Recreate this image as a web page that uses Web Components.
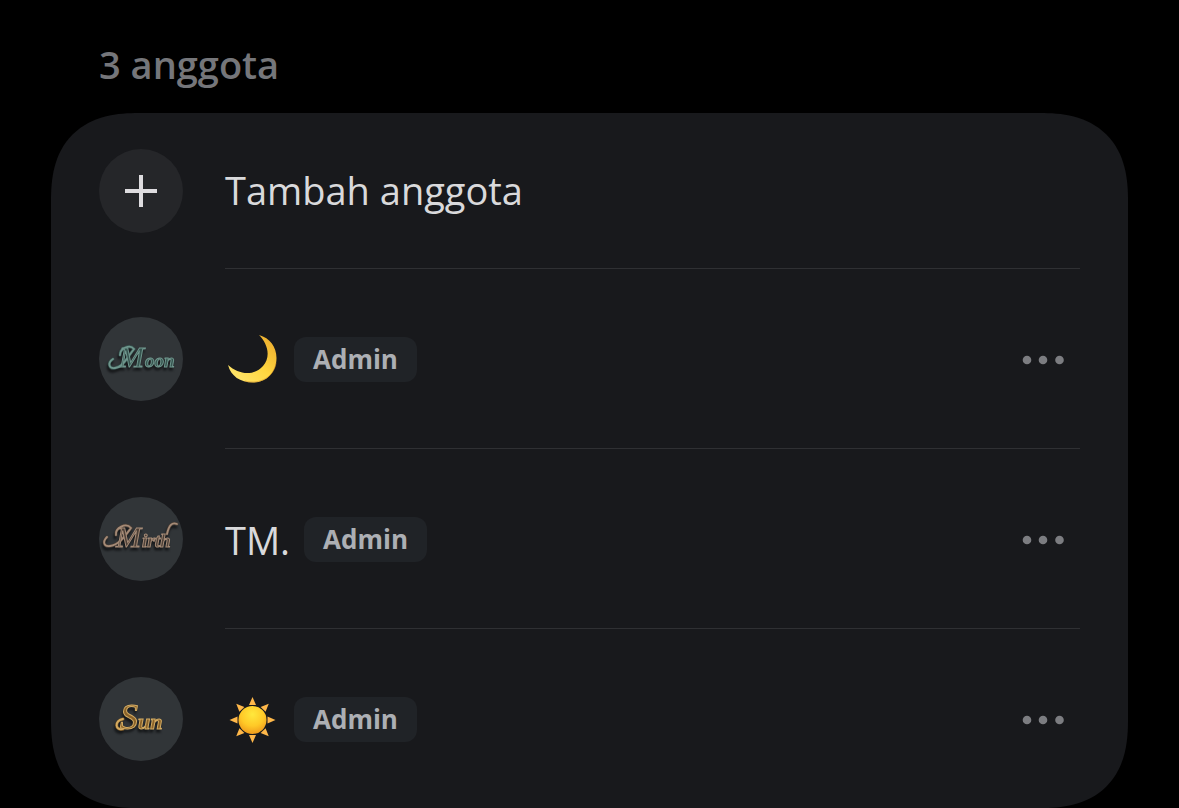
<!DOCTYPE html>
<html lang="id">
<head>
<meta charset="utf-8">
<meta name="viewport" content="width=device-width, initial-scale=1">
<title>Anggota grup</title>
<style>
  html { background: #000; }
  body { margin: 0; background: #000; color: #d9d9db; font: 400 38px/56px "Open Sans", "Noto Sans", sans-serif; }
</style>
</head>
<body>
<member-section>
  <span slot="title">3 anggota</span>
  <add-member-row>Tambah anggota</add-member-row>
  <member-row><word-avatar slot="avatar" word="Moon"></word-avatar><emoji-moon></emoji-moon></member-row>
  <member-row><word-avatar slot="avatar" word="Mirth"></word-avatar>TM.</member-row>
  <member-row class="last"><word-avatar slot="avatar" word="Sun"></word-avatar><emoji-sun></emoji-sun></member-row>
</member-section>

<script>
const define = (name, html, setup) => {
  const template = document.createElement('template');
  template.innerHTML = html;
  customElements.define(name, class extends HTMLElement {
    constructor() {
      super();
      this.attachShadow({ mode: 'open' }).append(template.content.cloneNode(true));
    }
    connectedCallback() { if (setup) setup(this, this.shadowRoot); }
  });
};

define('member-section', `
  <style>
    :host { display: block; padding: 36px 51px 0; }
    h2 { margin: 0 48px 21px; font: inherit; font-weight: 600; color: #75767a; }
    .card { background: #18191c; border-radius: 76px; padding: 0 48px; overflow: hidden; }
    @supports (corner-shape: superellipse(1.3)) {
      .card { border-radius: 88px; corner-shape: superellipse(1.3); }
    }
  </style>
  <section aria-labelledby="t">
    <h2 id="t"><slot name="title"></slot></h2>
    <div class="card"><slot></slot></div>
  </section>`);

define('add-member-row', `
  <style>
    :host { display: block; }
    button { display: flex; gap: 42px; width: 100%; padding: 0; border: 0; background: none; font: inherit; color: inherit; text-align: left; cursor: pointer; }
    .icon { display: grid; place-items: center; width: 84px; height: 84px; margin: 36px 0; border-radius: 50%; background: #252629; flex: none; }
    .label { flex: 1; display: flex; align-items: center; padding-bottom: 2px; border-bottom: 1px solid #2f3033; }
    svg { display: block; }
  </style>
  <button type="button">
    <span class="icon"><svg width="32" height="32" viewBox="0 0 32 32" aria-hidden="true"><path d="M16 0V32M0 16H32" stroke="#dedcdf" stroke-width="4"/></svg></span>
    <span class="label"><slot></slot></span>
  </button>`);

define('member-row', `
  <style>
    :host { display: flex; gap: 42px; }
    .avatar { flex: none; padding: 48px 0; }
    .body { flex: 1; display: flex; align-items: center; gap: 14px; padding-top: 2px; border-bottom: 1px solid #2f3033; }
    :host(.last) .body { border-bottom: 0; }
    :host(.last) .avatar { padding-bottom: 47px; }
    .name { display: block; }
    button { margin-left: auto; padding: 18px 16px; border: 0; background: none; cursor: pointer; }
    svg { display: block; }
  </style>
  <div class="avatar"><slot name="avatar"></slot></div>
  <div class="body">
    <span class="name"><slot></slot></span>
    <role-badge>Admin</role-badge>
    <button type="button" aria-label="Opsi lainnya"><svg width="42" height="10" viewBox="0 0 42 10" fill="#7c7d81"><circle cx="5" cy="5" r="4.3"/><circle cx="21" cy="5" r="4.3"/><circle cx="37.5" cy="5" r="4.3"/></svg></button>
  </div>`);

define('role-badge', `
  <style>
    :host { display: block; padding: 0 19px; border-radius: 12px; background: #202327; color: #acafb4; font-size: 26px; line-height: 45px; font-weight: 700; }
  </style><slot></slot>`);

define('emoji-moon', `
  <style>:host { display: block; } svg { display: block; }</style>
  <svg width="55" height="56" viewBox="0 0 55 56" role="img" aria-label="Bulan sabit">
    <defs><linearGradient id="g" x1="0" y1="1" x2="1" y2="0"><stop offset="0" stop-color="#ffe877"/><stop offset=".5" stop-color="#ffd740"/><stop offset="1" stop-color="#e9a62b"/></linearGradient></defs>
    <path d="M34 3C45 6 51.500 15 51.500 26C51.500 41 41 50.500 28 50.500C15 50.500 6 44 3 33C14 43 29 44 38 34C46 25 43 12 34 3Z" fill="url(#g)"/>
    <path d="M20 49C35 53 49 45 51 31" fill="none" stroke="#cf861f" opacity=".5"/>
  </svg>`);

define('emoji-sun', `
  <style>:host { display: block; } svg { display: block; }</style>
  <svg width="55" height="56" viewBox="0 0 55 56" role="img" aria-label="Matahari">
    <defs>
      <radialGradient id="g" cx=".5" cy=".3" r=".75"><stop offset="0" stop-color="#ffe83d"/><stop offset=".55" stop-color="#ffc927"/><stop offset="1" stop-color="#ee9319"/></radialGradient>
      <path id="ray" d="M27.5 5L31 13H24Z"/>
    </defs>
    <g fill="#ffb84a">
      <use href="#ray"/><use href="#ray" transform="rotate(45 27.5 28)"/><use href="#ray" transform="rotate(90 27.5 28)"/><use href="#ray" transform="rotate(135 27.5 28)"/><use href="#ray" transform="rotate(180 27.5 28)"/><use href="#ray" transform="rotate(225 27.5 28)"/><use href="#ray" transform="rotate(270 27.5 28)"/><use href="#ray" transform="rotate(315 27.5 28)"/>
    </g>
    <circle cx="27.5" cy="28" r="14" fill="url(#g)"/>
  </svg>`);

/* Script lettering of each avatar: first letter, remaining letters, and the swashes round them. */
const WORDS = {
  Moon: { ink: '#36544f', light: '#6f968d', x: 20, y: 50, size: 30, rest: 46, restSize: 19,
    swash: 'M14 42C8 46 10 52 16 51C24 50 28 41 35 32C31 27 21 31 21 38' },
  Mirth: { ink: '#4d4037', light: '#a58b77', x: 17, y: 50, size: 30, rest: 43, restSize: 19,
    swash: 'M8 40C3 45 5 50 11 49C20 48 26 39 32 31C27 25 16 31 17 38M68 37C70 28 73 25 78 27' },
  Sun: { ink: '#8a6229', light: '#d3ab62', x: 21, y: 52, size: 36, rest: 39, restSize: 22,
    swash: 'M24 42C15 44 16 54 24 52' }
};

define('word-avatar', `
  <style>
    :host { display: block; width: 84px; height: 84px; border-radius: 50%; background: #313538; overflow: hidden; }
    svg { display: block; }
    text { font-family: "Liberation Serif", serif; font-style: italic; }
    .rest { font-weight: 700; }
    g { filter: drop-shadow(-1px 3px 1px #141618); }
  </style>
  <svg width="84" height="84" viewBox="0 0 84 84">
    <g><path fill="none" stroke-width="3" stroke-linecap="round"/><path fill="none" stroke-width="1.8" stroke-linecap="round"/><text stroke-width="1"><tspan></tspan><tspan class="rest"></tspan></text></g>
  </svg>`, (host, root) => {
  const word = host.getAttribute('word');
  const w = WORDS[word];
  const [base, shine] = root.querySelectorAll('path');
  base.setAttribute('d', w.swash);
  base.setAttribute('stroke', w.ink);
  shine.setAttribute('d', w.swash);
  shine.setAttribute('stroke', w.light);
  const text = root.querySelector('text');
  text.setAttribute('y', w.y);
  text.setAttribute('fill', w.ink);
  text.setAttribute('stroke', w.light);
  const [first, rest] = root.querySelectorAll('tspan');
  first.textContent = word[0];
  first.setAttribute('x', w.x);
  first.setAttribute('font-size', w.size);
  rest.textContent = word.slice(1);
  rest.setAttribute('x', w.rest);
  rest.setAttribute('font-size', w.restSize);
});
</script>
</body>
</html>
